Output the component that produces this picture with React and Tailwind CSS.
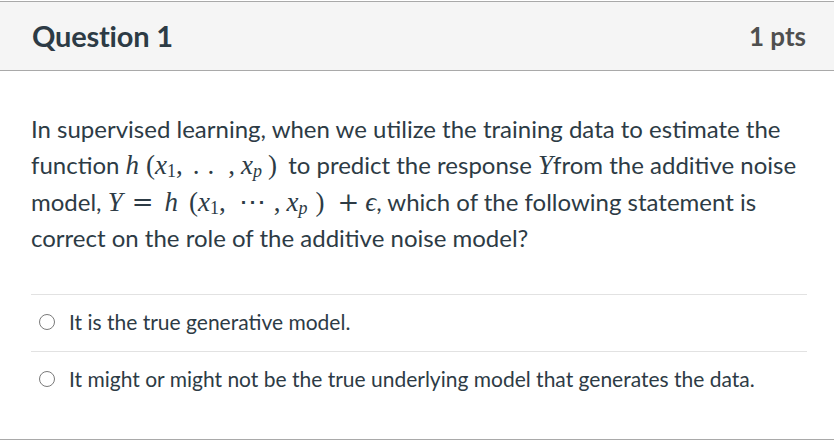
import React from "react";

const serif = "font-['Liberation_Serif',serif] text-[27px] leading-none inline-block";
const I = ({ c, cls = "" }) => <span className={serif + " italic " + cls}>{c}</span>;
const R = ({ c, cls = "" }) => <span className={serif + " " + cls}>{c}</span>;
const Op = ({ c, cls = "" }) => (
  <span className={"font-['DejaVu_Serif',serif] text-[26px] leading-none inline-block font-light " + cls}>{c}</span>
);
const Sub = ({ c, italic, cls = "" }) => (
  <span
    className={
      "font-['Liberation_Serif',serif] text-[18px] leading-none inline-block relative top-[3px] " +
      (italic ? "italic " : "") +
      cls
    }
  >
    {c}
  </span>
);

function Radio({ label }) {
  return (
    <div className="flex items-center h-[57px] pb-[3px] border-t border-[#e2e2e2] pl-[8px]">
      <span className="w-[16px] h-[16px] rounded-full border-[1.5px] border-[#7a7a7a] bg-white shrink-0" />
      <span className="ml-[14px] text-[21px] text-[#2d3b45]">{label}</span>
    </div>
  );
}

export default function App() {
  return (
    <div className="w-[834px] h-[446px] bg-white pt-px font-['Lato',sans-serif] overflow-hidden">
      <div className="border-y border-[#a9a9a9]">
        <div className="h-[69px] bg-[#f5f5f5] border-b border-[#a9a9a9] flex items-center justify-between pl-[32px] pr-[28px]">
          <span className="text-[29px] font-bold text-[#2d3b45] tracking-[-0.2px]">Question 1</span>
          <span className="text-[26px] font-bold text-[#4f4f4f]">1 pts</span>
        </div>
        <div className="h-[368px] px-[31px] pt-[40px]">
          <div className="text-[24px] text-[#2d3b45] whitespace-nowrap">
            <div className="h-[36.3px] leading-[36.3px]">
              In supervised learning, when we utilize the training data to estimate the
            </div>
            <div className="h-[36.3px] leading-[36.3px]">
              function <I c="h" />
              <R c="(" cls="ml-[7px]" />
              <I c="x" />
              <Sub c="1" />
              <R c="," />
              <R c="." cls="ml-[10px]" />
              <R c="." cls="ml-[8px]" />
              <R c="," cls="ml-[14px]" />
              <I c="x" cls="ml-[6px]" />
              <Sub c="p" italic />
              <R c=")" cls="ml-[6px] mr-[5px]" /> to predict the response <I c="Y" />
              from the additive noise
            </div>
            <div className="h-[36.3px] leading-[36.3px]">
              model, <I c="Y" />
              <Op c="=" cls="ml-[9px]" />
              <I c="h" cls="ml-[11px]" />
              <R c="(" cls="ml-[11px]" />
              <I c="x" />
              <Sub c="1" />
              <R c="," />
              <R c="⋯" cls="ml-[13px]" />
              <R c="," cls="ml-[8px]" />
              <I c="x" cls="ml-[6px]" />
              <Sub c="p" italic />
              <R c=")" cls="ml-[8px]" />
              <Op c="+" cls="ml-[13px]" />
              <I c="ϵ" cls="ml-[6px]" />, which of the following statement is
            </div>
            <div className="h-[36.3px] leading-[36.3px]">correct on the role of the additive noise model?</div>
          </div>
          <div className="mt-[38px] mr-[-4px]">
            <Radio label="It is the true generative model." />
            <Radio label="It might or might not be the true underlying model that generates the data." />
          </div>
        </div>
      </div>
    </div>
  );
}
